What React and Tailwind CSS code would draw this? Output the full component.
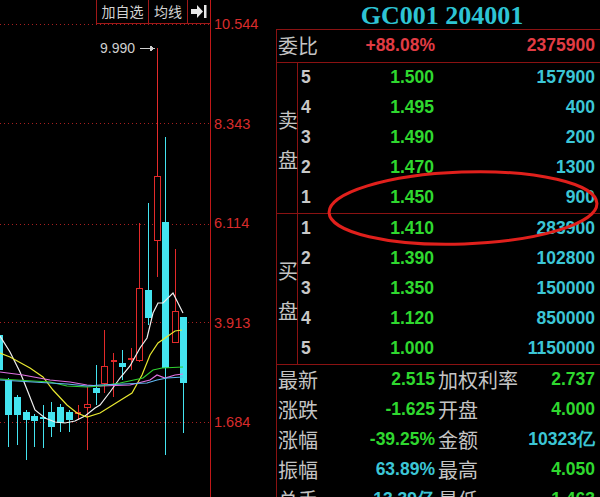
import React from 'react';

const GRID_Y = [24, 123, 224, 322, 422];
const AXIS = ['10.544', '8.343', '6.114', '3.913', '1.684'];

// x, high, low, bodyTop, bodyBottom, up(red) or down(cyan)
const candles = [
  [-1, 330, 372, 335, 370, 'c'],
  [8.5, 378, 447, 380, 415, 'c'],
  [17, 395, 445, 397, 415, 'c'],
  [26, 410, 460, 412, 420, 'c'],
  [34.5, 414, 447, 416, 421, 'c'],
  [43, 405, 448, 417, 418, 'c'],
  [51.5, 402, 437, 412, 427, 'c'],
  [60, 404, 432, 407, 423, 'c'],
  [69, 410, 432, 412, 420, 'c'],
  [78, 405, 420, 412, 413, 'r'],
  [87, 387, 450, 404, 407, 'r'],
  [96, 365, 405, 388, 393, 'c'],
  [104.5, 330, 393, 366, 383, 'r'],
  [113.5, 353, 397, 360, 362, 'r'],
  [122, 350, 380, 363, 367, 'c'],
  [131, 348, 370, 358, 360, 'r'],
  [139.5, 223, 362, 288, 360, 'r'],
  [148.5, 203, 325, 290, 318, 'c'],
  [157, 48, 277, 176, 240, 'r'],
  [165.5, 137, 455, 222, 368, 'c'],
  [175, 249, 342, 311, 342, 'r'],
  [183.5, 317, 433, 317, 383, 'c'],
];

const lines = {
  '#f0f0f0': '0,336 10,352 20,372 28,392 35,410 45,418 55,422 65,423 75,421 85,416 95,408 100,405 110,392 120,378 130,366 140,348 147,338 153,313 158,303 163,303 173,293 183,313',
  '#e8e830': '0,353 10,357 30,368 43,377 53,390 67,405 77,413 87,417 100,413 116,403 132,393 142,375 150,355 158,343 168,336 175,331 182,330',
  '#e070e0': '0,372 23,375 50,380 70,382 87,385 100,386 130,385 150,380 157,375 165,378 175,375 183,374',
  '#30d030': '0,379 33,381 50,382 67,386 87,387 100,386 120,383 143,378 153,370 162,368 183,367',
  '#60b8f0': '0,380 33,382 67,384 87,386 100,385 147,383 157,380 167,378 183,377',
};

const Chart = () => (
  <svg width="210" height="497" className="block" shapeRendering="crispEdges">
    {GRID_Y.map((y) => (
      <line key={y} x1="0" x2="210" y1={y + 0.5} y2={y + 0.5} stroke="#a82020" strokeDasharray="1 3" />
    ))}
    {candles.map(([x, hi, lo, top, bot, t], i) => {
      const col = t === 'r' ? '#e22a2a' : '#44e4f0';
      return (
        <g key={i}>
          <line x1={x} x2={x} y1={hi} y2={lo} stroke={col} />
          {bot - top < 3 ? (
            <line x1={x - 3} x2={x + 3} y1={top + 1} y2={top + 1} stroke={col} strokeWidth="2" />
          ) : t === 'r' ? (
            <rect x={x - 3} y={top} width="6" height={bot - top} fill="#000" stroke={col} />
          ) : (
            <rect x={x - 3.5} y={top} width="7" height={bot - top} fill={col} />
          )}
        </g>
      );
    })}
    <g shapeRendering="auto">
      {Object.entries(lines).map(([c, p]) => (
        <polyline key={c} points={p} fill="none" stroke={c} strokeWidth="1.2" />
      ))}
    </g>
    <text x="100" y="53" fill="#cfcfcf" fontSize="14" fontFamily="Liberation Sans, sans-serif">9.990</text>
    <line x1="140" x2="154" y1="48.5" y2="48.5" stroke="#cfcfcf" />
    <polygon points="150,45.5 155,48.5 150,51.5" fill="#cfcfcf" />
  </svg>
);

const num = "font-['Liberation_Sans',sans-serif] font-bold text-[17.5px] leading-none";
const cjk = "font-['Noto_Sans_CJK_SC',sans-serif] text-[20px] leading-none text-[#c4c4c4]";
const green = 'text-[#2fd82f]';
const cyan = 'text-[#3cc6d6]';
const red = 'text-[#e23c44]';

const sell = [
  ['5', '1.500', '157900'],
  ['4', '1.495', '400'],
  ['3', '1.490', '200'],
  ['2', '1.470', '1300'],
  ['1', '1.450', '900'],
];
const buy = [
  ['1', '1.410', '283900'],
  ['2', '1.390', '102800'],
  ['3', '1.350', '150000'],
  ['4', '1.120', '850000'],
  ['5', '1.000', '1150000'],
];
const stats = [
  ['最新', '2.515', green, '加权利率', '2.737', green],
  ['涨跌', '-1.625', green, '开盘', '4.000', green],
  ['涨幅', '-39.25%', green, '金额', '10323亿', cyan],
  ['振幅', '63.89%', cyan, '最高', '4.050', green],
  ['总手', '13.39亿', cyan, '最低', '1.463', green],
];

const Book = ({ label, rows }) => (
  <div className="shrink-0 flex border-b border-[#8a1212]">
    <div className={`w-[21px] border-r border-[#8a1212] flex flex-col justify-center items-start gap-5 pl-px pt-[3px] ${cjk}`}>
      <span>{label[0]}</span>
      <span>{label[1]}</span>
    </div>
    <div className="flex-1 flex flex-col">
      {rows.map(([i, p, v]) => (
        <div key={i} className={`h-[30px] shrink-0 flex items-center ${num}`}>
          <div className="w-[136px] flex justify-between pl-[3px]">
            <span className="text-[#c8c8c8]">{i}</span>
            <span className={green}>{p}</span>
          </div>
          <span className={`flex-1 text-right pr-[5px] ${cyan}`}>{v}</span>
        </div>
      ))}
    </div>
  </div>
);

const App = () => {
  return (
    <div className="relative w-[600px] h-[497px] bg-black overflow-hidden flex">
      {/* chart */}
      <div className="relative w-[211px] h-full border-r border-[#c01818]">
        <Chart />
        <div className="absolute top-0 right-0 flex h-[24px] border-l border-b border-[#a01818] bg-black text-[14px] text-[#d2d2d2] font-['Noto_Sans_CJK_SC',sans-serif]">
          <div className="w-[52px] flex items-center justify-center border-r border-[#a01818]">加自选</div>
          <div className="w-[39px] flex items-center justify-center border-r border-[#a01818]">均线</div>
          <div className="w-[22px] flex items-center justify-center">
            <svg width="16" height="13" viewBox="0 0 16 13">
              <polygon points="0,4 6,4 6,0 12,6.5 6,13 6,9 0,9" fill="#e8e8e8" />
              <rect x="13" y="0" width="2.5" height="13" fill="#e8e8e8" />
            </svg>
          </div>
        </div>
      </div>

      {/* price axis */}
      <div className="w-[65px] mt-[14px] h-[418px] flex flex-col justify-between pl-[3px]">
        {AXIS.map((a) => (
          <span key={a} className="h-[20px] leading-[20px] text-[14.5px] text-[#d82c2c] font-['Liberation_Sans',sans-serif]">{a}</span>
        ))}
      </div>

      {/* quote panel */}
      <div className="w-[324px] h-full flex flex-col overflow-hidden">
        <div className="h-[29px] shrink-0 flex items-center justify-center pl-[8px] pt-px text-[26px] leading-[29px] font-bold text-[#2ec4d4] font-['Liberation_Serif',serif]">
          GC001 204001
        </div>
        <div className="shrink-0 flex flex-col border-l border-t border-[#8a1212]">
          <div className="h-[33px] shrink-0 flex items-center border-b border-[#8a1212]">
            <div className="w-[158px] flex items-center justify-between pl-px">
              <span className={cjk}>委比</span>
              <span className={`${num} ${red}`}>+88.08%</span>
            </div>
            <span className={`flex-1 text-right pr-[5px] ${num} ${red}`}>2375900</span>
          </div>
          <Book label="卖盘" rows={sell} />
          <Book label="买盘" rows={buy} />
          <div className="shrink-0 flex flex-col">
            {stats.map(([l1, v1, c1, l2, v2, c2]) => (
              <div key={l1} className="h-[30px] shrink-0 flex items-center">
                <div className="w-[158px] flex items-center justify-between pl-px">
                  <span className={cjk}>{l1}</span>
                  <span className={`${num} ${c1}`}>{v1}</span>
                </div>
                <div className="flex-1 flex items-center justify-between pl-[3px] pr-[5px]">
                  <span className={cjk}>{l2}</span>
                  <span className={`${num} ${c2}`}>{v2}</span>
                </div>
              </div>
            ))}
          </div>
        </div>
      </div>

      {/* hand-drawn highlight */}
      <svg className="absolute left-0 top-0 pointer-events-none" width="600" height="497">
        <ellipse cx="463" cy="208" rx="134" ry="36" transform="rotate(-2 463 208)" fill="none" stroke="#e0201c" strokeWidth="3" />
      </svg>
    </div>
  );
};

export default App;
